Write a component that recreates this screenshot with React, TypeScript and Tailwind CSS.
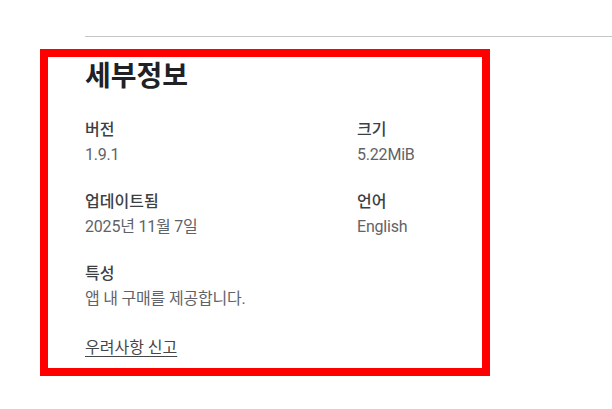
const details = [
  { label: "버전", value: "1.9.1" },
  { label: "크기", value: "5.22MiB" },
  { label: "업데이트됨", value: "2025년 11월 7일" },
  { label: "언어", value: "English" },
  { label: "특성", value: "앱 내 구매를 제공합니다." },
];

const App = () => {
  return (
    <div
      className="h-[409px] w-[612px] overflow-hidden bg-white pt-[36px] text-[#202124]"
      style={{ fontFamily: 'Roboto, "Noto Sans CJK KR", sans-serif' }}
    >
      <div className="ml-[85px] border-t border-[#c4c7c5]" />
      <section className="mt-[12px] ml-[40px] h-[327px] w-[450px] border-[8px] border-[#ff0000] pt-[4px] pl-[37px]">
        <h2 className="text-[28px] leading-[32px] font-bold">세부정보</h2>
        <div className="mt-[27px] grid grid-cols-[272px_1fr] gap-y-[27px]">
          {details.map((item) => (
            <div key={item.label} className="flex flex-col gap-[5px]">
              <div className="text-[16px] leading-[20px] font-medium text-[#3c4043]">{item.label}</div>
              <div className="text-[16px] leading-[20px] tracking-[-0.2px] text-[#5f6368]">{item.value}</div>
            </div>
          ))}
        </div>
        <a
          href="#"
          className="mt-[29px] block w-fit text-[16px] leading-[20px] text-[#444746] underline underline-offset-[3px]"
        >
          우려사항 신고
        </a>
      </section>
    </div>
  );
};

export default App;
